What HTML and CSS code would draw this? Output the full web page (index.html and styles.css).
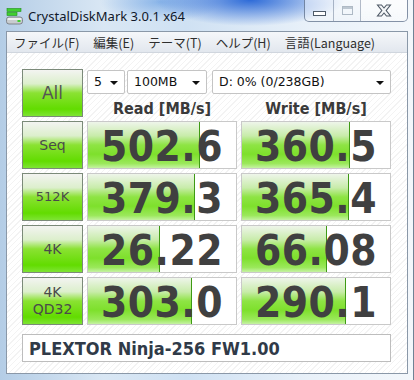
FILE: index.html
```html
<!DOCTYPE html>
<html lang="ja">
<head>
    <meta charset="UTF-8">
    <meta name="viewport" content="width=device-width, initial-scale=1.0">
    <title>CrystalDiskMark 3.0.1 x64</title>
    <link rel="stylesheet" href="styles.css">
</head>
<body>
    <div class="window">
        <div class="titlebar">
            <svg class="app-icon" width="17" height="17" viewBox="0 0 17 17">
                <rect x="1" y="0.5" width="14" height="3" fill="#3fcf2f" stroke="#1f8f1a" stroke-width="0.6"/>
                <rect x="1" y="4.5" width="10" height="3" fill="#3fcf2f" stroke="#1f8f1a" stroke-width="0.6"/>
                <rect x="0.5" y="9" width="16" height="7" rx="2.5" fill="#c8cccf" stroke="#6e7478" stroke-width="0.8"/>
                <rect x="1.5" y="10" width="14" height="2" rx="1" fill="#eef0f2"/>
                <rect x="11.5" y="12" width="3" height="2" fill="#3fcf2f"/>
            </svg>
            <span class="title">CrystalDiskMark 3.0.1 x64</span>
            <div class="caption-buttons">
                <span class="cap-btn min"><i></i></span>
                <span class="cap-btn max"><i></i></span>
                <span class="cap-btn close">
                    <svg width="16" height="13" viewBox="0 0 16 13">
                        <path d="M1.5 1 L5.5 1 L8 4 L10.5 1 L14.5 1 L10.2 6.5 L14.5 12 L10.5 12 L8 9 L5.5 12 L1.5 12 L5.8 6.5 Z" fill="#f4f6f8" stroke="#4e5966" stroke-width="1.1"/>
                    </svg>
                </span>
            </div>
        </div>

        <div class="frame">
            <div class="menubar">
                <span>ファイル(F)</span>
                <span>編集(E)</span>
                <span>テーマ(T)</span>
                <span>ヘルプ(H)</span>
                <span>言語(Language)</span>
            </div>

            <div class="client">
                <div class="grid">
                    <div class="label all">All</div>
                    <div class="top-controls">
                        <div class="selects">
                            <div class="select s-count">5<b></b></div>
                            <div class="select s-size">100MB<b></b></div>
                            <div class="select s-drive">D: 0% (0/238GB)<b></b></div>
                        </div>
                        <div class="headers">
                            <span>Read [MB/s]</span>
                            <span>Write [MB/s]</span>
                        </div>
                    </div>

                    <div class="label">Seq</div>
                    <div class="value"><div class="bar" style="width:111px"></div><span>502.6</span></div>
                    <div class="value"><div class="bar" style="width:107px"></div><span>360.5</span></div>

                    <div class="label small">512K</div>
                    <div class="value"><div class="bar" style="width:106px"></div><span>379.3</span></div>
                    <div class="value"><div class="bar" style="width:106px"></div><span>365.4</span></div>

                    <div class="label">4K</div>
                    <div class="value"><div class="bar" style="width:71px"></div><span>26.22</span></div>
                    <div class="value"><div class="bar" style="width:84px"></div><span>66.08</span></div>

                    <div class="label">4K<br>QD32</div>
                    <div class="value"><div class="bar" style="width:103px"></div><span>303.0</span></div>
                    <div class="value"><div class="bar" style="width:103px"></div><span>290.1</span></div>
                </div>

                <div class="drive-info">PLEXTOR Ninja-256 FW1.00</div>
            </div>
        </div>
    </div>
</body>
</html>
```

FILE: styles.css
```css
body {
    margin: 0;
    width: 414px;
    height: 380px;
    overflow: hidden;
    font-family: "DejaVu Sans", sans-serif;
    background:
        radial-gradient(ellipse 95px 26px at 250px 0, rgba(36, 100, 214, 0.95), rgba(60, 130, 225, 0) 100%),
        radial-gradient(ellipse 60px 20px at 160px 2px, rgba(90, 150, 225, 0.6), rgba(90, 150, 225, 0) 100%),
        linear-gradient(90deg, #b4cde6 0, #d9e7f4 25%, #cfe1f3 45%, #e9f1f9 75%, #f3f7fb 100%);
}
.window {
    height: 380px;
    box-sizing: border-box;
    border-right: 1px solid #6f8295;
    display: flex;
    flex-direction: column;
}
.titlebar {
    height: 31px;
    display: flex;
    align-items: center;
    flex-shrink: 0;
}
.app-icon {
    margin: 1px 0 0 6px;
}
.title {
    margin-left: 5px;
    font-family: "Noto Sans", sans-serif;
    font-size: 13px;
    color: #10182a;
    padding-top: 1px;
}
.caption-buttons {
    margin-left: auto;
    margin-right: 5px;
    align-self: flex-start;
    display: flex;
    height: 21px;
    border: 1px solid rgba(70, 90, 120, 0.65);
    border-top: none;
    border-radius: 0 0 5px 5px;
    overflow: hidden;
    background: linear-gradient(rgba(255, 255, 255, 0.45), rgba(255, 255, 255, 0.2));
}
.cap-btn {
    display: flex;
    align-items: center;
    justify-content: center;
    border-left: 1px solid rgba(70, 90, 120, 0.4);
}
.cap-btn:first-child {
    border-left: none;
}
.min {
    width: 28px;
}
.min i {
    width: 11px;
    height: 3px;
    margin-top: 6px;
    background: #fff;
    border: 1px solid #4d5a68;
}
.max {
    width: 26px;
}
.max i {
    width: 9px;
    height: 7px;
    border: 1px solid rgba(90, 110, 130, 0.45);
    box-shadow: inset 0 2px 0 rgba(90, 110, 130, 0.35);
}
.close {
    width: 46px;
    background: linear-gradient(rgba(255, 255, 255, 0.5), rgba(255, 255, 255, 0.25));
}
.frame {
    flex: 1;
    margin: 0 5px 6px 6px;
    border: 1px solid #8a98a8;
    background: #fff;
    display: flex;
    flex-direction: column;
}
.menubar {
    height: 20px;
    display: flex;
    align-items: center;
    gap: 14px;
    padding-left: 7px;
    font-family: "Noto Sans CJK JP", sans-serif;
    font-size: 12.5px;
    color: #2e2e2e;
    background: linear-gradient(#f5f7fa, #e2e7ee);
    border-bottom: 1px solid #d0d6de;
}
.client {
    flex: 1;
    padding: 16px 0 0 15px;
    background: repeating-linear-gradient(135deg, #ffffff 0, #ffffff 3px, #f3f3f3 3px, #f3f3f3 4px);
}
.grid {
    display: grid;
    grid-template-columns: 61px 150px 150px;
    grid-auto-rows: 48px;
    column-gap: 4px;
    row-gap: 4px;
}
.label {
    border: 1px solid #7b8a79;
    background: linear-gradient(#f3f4f1 0%, #dcefcc 30%, #8ae232 50%, #62dc00 85%, #7ee434 100%);
    display: flex;
    align-items: center;
    justify-content: center;
    text-align: center;
    color: #4a4a4a;
    font-size: 14px;
    line-height: 1.2;
}
.label.all {
    font-size: 17px;
    color: #555;
}
.label.small {
    font-size: 13px;
}
.top-controls {
    grid-column: 2 / 4;
    display: flex;
    flex-direction: column;
}
.selects {
    display: flex;
    margin-top: 1px;
    height: 24px;
}
.select {
    position: relative;
    box-sizing: border-box;
    border: 1px solid #c4c4c4;
    border-radius: 2px;
    background: #fff;
    font-size: 12.5px;
    color: #111;
    padding-left: 6px;
    line-height: 22px;
}
.select b {
    position: absolute;
    right: 6px;
    top: 10px;
    border-left: 4px solid transparent;
    border-right: 4px solid transparent;
    border-top: 4px solid #111;
}
.s-count {
    width: 38px;
}
.s-size {
    width: 80px;
    margin-left: 2px;
}
.s-drive {
    width: 179px;
    margin-left: 5px;
}
.headers {
    display: flex;
    gap: 4px;
    margin-top: 5px;
}
.headers span {
    width: 150px;
    text-align: center;
    font-family: "DejaVu Sans Condensed", "DejaVu Sans", sans-serif;
    font-weight: bold;
    font-size: 16px;
    color: #3a3a3a;
}
.value {
    position: relative;
    border: 1px solid #c9c9c9;
    background: #fff;
    display: flex;
    align-items: center;
    justify-content: center;
    overflow: hidden;
}
.bar {
    position: absolute;
    left: 0;
    top: 0;
    bottom: 0;
    border-right: 1px solid #3e9a14;
    background: linear-gradient(#eef5ea 0%, #c8ecaa 30%, #8ee444 50%, #7ee02c 70%, #9ae85a 90%, #c6f2a4 100%);
}
.value span {
    position: relative;
    font-family: "DejaVu Sans Condensed", "DejaVu Sans", sans-serif;
    font-weight: bold;
    font-size: 42px;
    letter-spacing: 0.5px;
    color: #404040;
    margin-top: 2px;
}
.drive-info {
    width: 369px;
    height: 28px;
    box-sizing: border-box;
    margin-top: 9px;
    border: 1px solid #bdbdbd;
    background: #fff;
    padding-left: 6px;
    display: flex;
    align-items: center;
    font-family: "DejaVu Sans Condensed", "DejaVu Sans", sans-serif;
    font-weight: bold;
    font-size: 18px;
    color: #303a48;
}
```
